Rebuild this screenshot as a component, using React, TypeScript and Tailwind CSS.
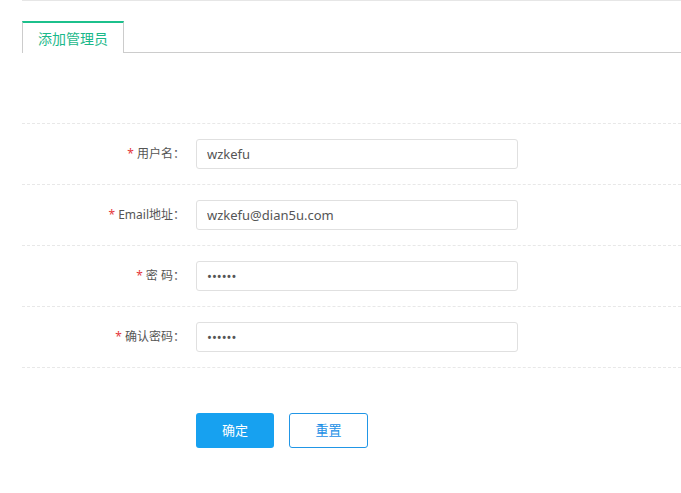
import React from "react";

const fields = [
  { label: "用户名", value: "wzkefu", type: "text" },
  { label: "Email地址", value: "wzkefu@dian5u.com", type: "text" },
  { label: "密 码", value: "123456", type: "password" },
  { label: "确认密码", value: "123456", type: "password" },
];

export default function App() {
  return (
    <div className="min-h-screen bg-white pl-[22px] font-['Noto_Sans','Noto_Sans_CJK_SC',sans-serif] text-[#555]">
      <div className="border-t border-[#e6e6e6] pt-[20px]">
        {/* tabs */}
        <div className="flex items-end">
          <div className="flex h-[32px] w-[102px] items-center justify-center border-x border-t-2 border-x-[#cccccc] border-t-[#1cc08c] bg-white text-[14px] text-[#1ab88a]">
            添加管理员
          </div>
          <div className="flex-1 border-b border-[#cccccc]" />
        </div>

        <div className="mt-[70px] border-t border-dashed border-[#e8e8e8]">
          {fields.map((f) => (
            <div
              key={f.label}
              className="flex h-[61px] items-center border-b border-dashed border-[#e8e8e8]"
            >
              <label className="w-[174px] pr-[11px] text-right text-[12px] whitespace-pre">
                <span className="mr-[3px] text-[#e4393c]">*</span>
                {f.label}：
              </label>
              <input
                readOnly
                type={f.type}
                defaultValue={f.value}
                className="h-[30px] w-[322px] rounded-[3px] border border-[#e0e0e0] px-[10px] text-[13px] text-[#555] outline-none"
              />
            </div>
          ))}
        </div>

        <div className="mt-[45px] flex gap-[15px] pl-[174px]">
          <button className="h-[35px] w-[78px] rounded-[3px] bg-[#17a1f0] text-[13px] text-white">
            确定
          </button>
          <button className="h-[35px] w-[79px] rounded-[3px] border border-[#2196e6] bg-white text-[13px] text-[#1a8fe6]">
            重置
          </button>
        </div>
      </div>
    </div>
  );
}
